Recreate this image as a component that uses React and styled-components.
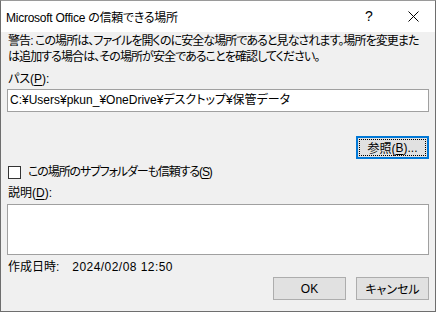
import React from 'react';
import styled, { createGlobalStyle } from 'styled-components';

const GlobalStyle = createGlobalStyle`
  html, body {
    margin: 0;
    padding: 0;
    background: #f0f0f0;
  }
  body {
    font-family: "Liberation Sans", "Noto Sans CJK JP", sans-serif;
    font-size: 12px;
    font-feature-settings: "palt";
    color: #000;
  }
`;

const Window = styled.div`
  width: 436px;
  height: 312px;
  box-sizing: border-box;
  border: 1px solid #6e6e6e;
  border-top-color: #9a9a9a;
  background: #f0f0f0;
  display: flex;
  flex-direction: column;
`;

const TitleBar = styled.div`
  height: 30px;
  background: #fff;
  display: flex;
  align-items: center;
  padding-left: 5px;
  padding-bottom: 1px;
  flex-shrink: 0;
`;

const Title = styled.div`
  flex: 1;
  font-size: 12px;
  letter-spacing: -0.25px;
`;

const TitleButton = styled.div`
  width: 44px;
  height: 30px;
  display: flex;
  align-items: center;
  justify-content: center;
  font-size: 14px;
`;

const Body = styled.div`
  display: flex;
  flex-direction: column;
  padding: 1px 6px 0 6px;
`;

const Warning = styled.div`
  line-height: 16px;
  padding-left: 1px;
  letter-spacing: -0.92px;
  white-space: nowrap;
`;

const Label = styled.div`
  line-height: 16px;
  padding-left: 1px;
  margin-top: ${(p) => p.$top || 0}px;
`;

const Key = styled.span`
  text-decoration: underline;
  text-underline-offset: 2px;
`;

const TextBox = styled.div`
  height: ${(p) => p.$height}px;
  box-sizing: border-box;
  border: 1px solid #a0a0a0;
  background: #fff;
  margin-top: ${(p) => p.$top || 0}px;
  padding: 3px 2px;
  line-height: 15px;
  white-space: nowrap;
`;

const ButtonRow = styled.div`
  display: flex;
  justify-content: flex-end;
  gap: 10px;
  margin-top: ${(p) => p.$top || 0}px;
`;

const Button = styled.div`
  position: relative;
  width: 73px;
  height: 23px;
  box-sizing: border-box;
  border: ${(p) => (p.$focused ? '2px solid #0078d7' : '1px solid #adadad')};
  background: #e1e1e1;
  display: flex;
  align-items: center;
  justify-content: center;

  ${(p) => p.$focused && `
    &::after {
      content: '';
      position: absolute;
      inset: 1px;
      border: 1px dotted #000;
    }
  `}
`;

const CheckRow = styled.div`
  display: flex;
  align-items: center;
  gap: 7px;
  margin-top: 5px;
  padding-left: 1px;
  line-height: 16px;
`;

const CheckLabel = styled.span`
  letter-spacing: -1.1px;
`;

const CheckBox = styled.div`
  width: 13px;
  height: 13px;
  box-sizing: border-box;
  border: 1px solid #333;
  background: #fff;
`;

const Created = styled.div`
  display: flex;
  gap: 13px;
  line-height: 16px;
  margin-top: 4px;
  padding-left: 1px;
`;

const DateText = styled.span`
  letter-spacing: 0.45px;
`;

export default function App() {
  return (
    <>
      <GlobalStyle />
      <Window>
        <TitleBar>
          <Title>Microsoft Office の信頼できる場所</Title>
          <TitleButton>?</TitleButton>
          <TitleButton>
            <svg width="11" height="11" viewBox="0 0 11 11">
              <path d="M0.5 0.5 L10.5 10.5 M10.5 0.5 L0.5 10.5" stroke="#000" strokeWidth="1" />
            </svg>
          </TitleButton>
        </TitleBar>
        <Body>
          <Warning>
            警告: この場所は、ファイルを開くのに安全な場所であると見なされます。場所を変更また
            <br />
            は追加する場合は、その場所が安全であることを確認してください。
          </Warning>
          <Label $top={6}>
            パス(<Key>P</Key>):
          </Label>
          <TextBox $height={23} $top={2}>
            C:¥Users¥pkun_¥OneDrive¥デスクトップ¥保管データ
          </TextBox>
          <ButtonRow $top={24}>
            <Button $focused>
              参照(<Key>B</Key>)...
            </Button>
          </ButtonRow>
          <CheckRow>
            <CheckBox />
            <CheckLabel>
              この場所のサブフォルダーも信頼する(<Key>S</Key>)
            </CheckLabel>
          </CheckRow>
          <Label $top={5}>
            説明(<Key>D</Key>):
          </Label>
          <TextBox $height={51} $top={3} />
          <Created>
            <span>作成日時:</span>
            <DateText>2024/02/08 12:50</DateText>
          </Created>
          <ButtonRow $top={2}>
            <Button>OK</Button>
            <Button>キャンセル</Button>
          </ButtonRow>
        </Body>
      </Window>
    </>
  );
}
